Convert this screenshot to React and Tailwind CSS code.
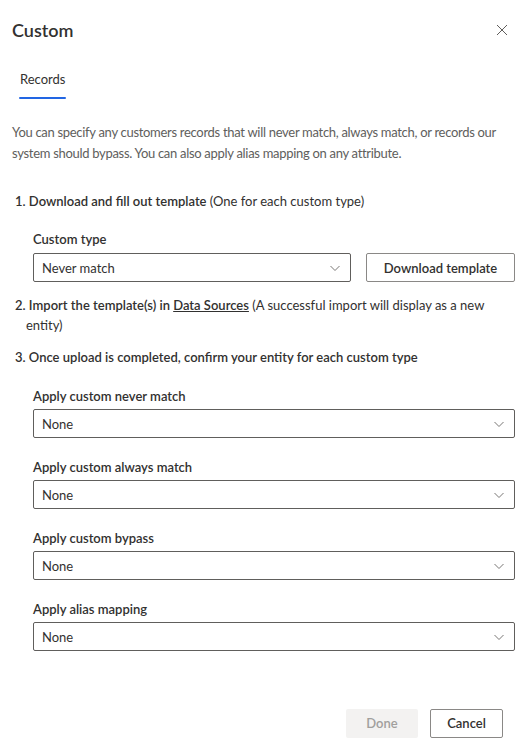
import React from "react";

const Chevron = () => (
  <svg width="12" height="12" viewBox="0 0 12 12" className="shrink-0">
    <path d="M1.5 4 L6 8.5 L10.5 4" fill="none" stroke="#797775" strokeWidth="1" />
  </svg>
);

const Dropdown = ({ value, className = "" }) => (
  <div
    className={`flex items-center justify-between h-[29px] border border-[#605e5c] rounded-[2px] pl-[8px] pr-[9px] text-[13px] text-[#323130] ${className}`}
  >
    <span>{value}</span>
    <Chevron />
  </div>
);

const Field = ({ label, value }) => (
  <div className="flex flex-col">
    <label className="text-[13px] font-semibold text-[#323130] leading-[20px] mb-[3px]">{label}</label>
    <Dropdown value={value} />
  </div>
);

const App = () => {
  return (
    <div
      className="w-[527px] h-[752px] bg-white flex flex-col text-[#323130]"
      style={{ fontFamily: 'Lato, "Noto Sans", sans-serif' }}
    >
      {/* Header */}
      <div className="flex items-center justify-between pl-[12px] pr-[18px] pt-[17px]">
        <h1 className="text-[18px] font-semibold leading-[26px] text-[#323130]">Custom</h1>
        <button aria-label="Close" className="w-[14px] h-[14px] flex items-center justify-center">
          <svg width="12" height="12" viewBox="0 0 12 12">
            <path d="M1 1 L11 11 M11 1 L1 11" stroke="#605e5c" strokeWidth="1" />
          </svg>
        </button>
      </div>

      {/* Tabs */}
      <div className="pl-[19px] mt-[23px]">
        <div className="inline-flex flex-col">
          <span className="text-[13px] leading-[20px] px-[1px] text-[#323130]">Records</span>
          <span className="h-[2px] bg-[#2266e3] mt-[8px] rounded-[1px]"></span>
        </div>
      </div>

      {/* Body */}
      <div className="px-[12px] mt-[23px]">
        <p className="text-[13px] leading-[21px] tracking-[-0.3px] text-[#605e5c]">
          You can specify any customers records that will never match, always match, or records our
          <br />
          system should bypass. You can also apply alias mapping on any attribute.
        </p>

        <ol className="mt-[27px] text-[13px] leading-[20px]">
          <li className="pl-[3px]">
            <span className="font-semibold">1. Download and fill out template</span>{" "}
            <span>(One for each custom type)</span>
            <div className="pl-[18px] mt-[18px]">
              <label className="block font-semibold leading-[20px] mb-[4px]">Custom type</label>
              <div className="flex gap-[15px]">
                <Dropdown value="Never match" className="w-[318px]" />
                <button className="h-[29px] flex-1 border border-[#8a8886] rounded-[2px] text-[13px] font-semibold text-[#323130]">
                  Download template
                </button>
              </div>
            </div>
          </li>
          <li className="mt-[13px] pl-[14px] indent-[-11px]">
            <span className="font-semibold">2. Import the template(s) in </span>
            <a className="font-semibold underline text-[#323130]">Data Sources</a>{" "}
            <span>(A successful import will display as a new</span>
            <br />
            <span>entity)</span>
          </li>
          <li className="mt-[12px] pl-[3px]">
            <span className="font-semibold">3. Once upload is completed, confirm your entity for each custom type</span>
            <div className="pl-[18px] mt-[19px] flex flex-col gap-[19px]">
              <Field label="Apply custom never match" value="None" />
              <Field label="Apply custom always match" value="None" />
              <Field label="Apply custom bypass" value="None" />
              <Field label="Apply alias mapping" value="None" />
            </div>
          </li>
        </ol>
      </div>

      {/* Footer */}
      <div className="mt-auto flex justify-end gap-[12px] pr-[24px] pb-[14px]">
        <button disabled className="h-[29px] w-[72px] bg-[#f3f2f1] rounded-[2px] text-[13px] font-semibold text-[#a19f9d]">
          Done
        </button>
        <button className="h-[29px] w-[73px] border border-[#8a8886] rounded-[2px] text-[13px] font-semibold text-[#323130]">
          Cancel
        </button>
      </div>
    </div>
  );
};

export default App;
